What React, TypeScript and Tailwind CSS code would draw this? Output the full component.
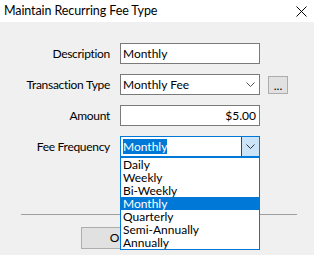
import React from 'react';

const FONT = { fontFamily: 'Lato, "Noto Sans", "Liberation Sans", sans-serif' };

const Chevron = ({ className }: { className: string }) => (
  <svg className={className} width="9" height="5" viewBox="0 0 9 5" fill="none" stroke="currentColor" strokeWidth="1">
    <path d="M0.5 0.5 L4.5 4.5 L8.5 0.5" />
  </svg>
);

const frequencies = ['Daily', 'Weekly', 'Bi-Weekly', 'Monthly', 'Quarterly', 'Semi-Annually', 'Annually'];

const Label = ({ children }: { children: React.ReactNode }) => (
  <div className="w-[110px] text-right text-[12px] leading-[21px] tracking-[-0.3px] text-black">{children}</div>
);

export default function App() {
  return (
    <div className="relative w-[314px] h-[255px] bg-[#f0f0f0] overflow-hidden" style={FONT}>
      {/* Title bar */}
      <div className="flex items-center justify-between h-[22px] bg-white pl-[4px] pr-[7px]">
        <span className="text-[12.5px] tracking-[-0.1px] text-black">Maintain Recurring Fee Type</span>
        <svg width="11" height="11" viewBox="0 0 11 11" stroke="#000" strokeWidth="1">
          <path d="M0.5 0.5 L10.5 10.5 M10.5 0.5 L0.5 10.5" />
        </svg>
      </div>

      {/* Form */}
      <div className="flex flex-col gap-[10px] pt-[21px]">
        <div className="flex items-center gap-[10px]">
          <Label>Description</Label>
          <div className="w-[140px] h-[21px] border border-[#7a7a7a] bg-white flex items-center px-[2px] text-[12px]">Monthly</div>
        </div>
        <div className="flex items-center gap-[10px]">
          <Label>Transaction Type</Label>
          <div className="w-[140px] h-[21px] border border-[#7a7a7a] bg-white flex items-center justify-between pl-[2px] pr-[4px] text-[12px]">
            <span>Monthly Fee</span>
            <Chevron className="text-[#555]" />
          </div>
          <button className="ml-[-2px] w-[20px] h-[18px] border border-[#adadad] bg-[#e1e1e1] text-[12px] text-black flex items-end justify-center pb-[2px]">
            <span className="leading-[10px]">...</span>
          </button>
        </div>
        <div className="flex items-center gap-[10px]">
          <Label>Amount</Label>
          <div className="w-[140px] h-[21px] border border-[#7a7a7a] bg-white flex items-center justify-end px-[3px] text-[12px]">$5.00</div>
        </div>
        <div className="flex items-center gap-[10px]">
          <Label>Fee Frequency</Label>
          <div className="w-[140px] h-[21px] border border-[#0078d7] bg-white flex items-stretch text-[12px]">
            <div className="flex-1 flex items-center pl-[2px]">
              <span className="bg-[#0078d7] text-white leading-[15px]">Monthly</span>
            </div>
            <div className="w-[18px] bg-[#cce4f7] border-l border-[#005499] flex items-center justify-center">
              <Chevron className="text-[#333]" />
            </div>
          </div>
        </div>
      </div>

      {/* Separator */}
      <div className="mx-[21px] mt-[57px] w-[276px] h-px bg-[#a0a0a0]" />

      {/* Buttons */}
      <div className="flex gap-[6px] pl-[81px] mt-[12px]">
        <button className="w-[75px] h-[22px] border border-[#adadad] bg-[#e1e1e1] text-[12px] text-black">OK</button>
        <button className="w-[75px] h-[22px] border border-[#adadad] bg-[#e1e1e1] text-[12px] text-black">Cancel</button>
      </div>

      {/* Open dropdown list */}
      <div className="absolute left-[120px] top-[157px] w-[140px] border border-[#0078d7] bg-white">
        {frequencies.map(f => (
          <div
            key={f}
            className={
              f === 'Monthly'
                ? 'h-[13px] leading-[13px] pl-[2px] text-[12px] bg-[#0078d7] text-white'
                : 'h-[13px] leading-[13px] pl-[2px] text-[12px] text-black'
            }
          >
            {f}
          </div>
        ))}
      </div>
    </div>
  );
}
